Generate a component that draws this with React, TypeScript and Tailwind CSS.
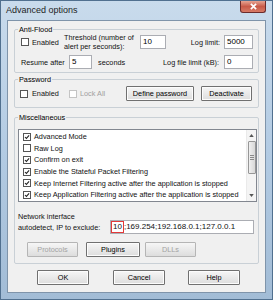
import type { ReactNode } from "react";

const FONT = { fontFamily: '"Liberation Sans", Arial, sans-serif' };

function Box({ checked = false, disabled = false }: { checked?: boolean; disabled?: boolean }) {
  return (
    <span
      className={`w-[8px] h-[8px] shrink-0 border ${disabled ? "border-[#c4c4c4]" : "border-[#555]"} bg-white flex items-center justify-center`}
    >
      {checked && (
        <svg viewBox="0 0 8 8" className="w-full h-full">
          <path d="M1.3 4 L3.2 5.9 L6.8 1.8" fill="none" stroke="#222" strokeWidth="1.4" />
        </svg>
      )}
    </span>
  );
}

function Field({ value, className = "" }: { value: ReactNode; className?: string }) {
  return (
    <div className={`h-[14px] border border-[#abadb3] bg-white px-[2px] text-[8px] leading-[12px] text-black ${className}`}>
      {value}
    </div>
  );
}

function Btn({ label, disabled = false, className = "" }: { label: string; disabled?: boolean; className?: string }) {
  return (
    <div
      className={`h-[15px] border rounded-[1px] flex items-center justify-center text-[7.3px] bg-gradient-to-b from-[#f6f6f6] to-[#dddddd] ${
        disabled ? "border-[#b5b5b5] text-[#a3a3a3]" : "border-[#707070] text-black shadow-[inset_0_0_0_1px_#fcfcfc]"
      } ${className}`}
    >
      {label}
    </div>
  );
}

function Group({ title, children, className = "" }: { title: string; children: ReactNode; className?: string }) {
  return (
    <fieldset className={`mx-[6px] border border-[#c9d0d6] rounded-[2px] ${className}`}>
      <legend className="ml-[3px] px-[1px] text-[7.3px] leading-[9px] text-black">{title}</legend>
      {children}
    </fieldset>
  );
}

const items: [string, boolean][] = [
  ["Advanced Mode", true],
  ["Raw Log", false],
  ["Confirm on exit", true],
  ["Enable the Stateful Packet Filtering", true],
  ["Keep Internet Filtering active after the application is stopped", true],
  ["Keep Application Filtering active after the application is stopped", true],
];

export default function App() {
  return (
    <div
      style={FONT}
      className="w-[273px] h-[300px] flex flex-col bg-gradient-to-b from-[#c9dbec] via-[#b3cbe3] to-[#a2bcd6] border border-[#51708f]"
    >
      {/* Title bar */}
      <div className="h-[19px] flex items-start justify-between pl-[5px] pr-[6px]">
        <span className="mt-[4px] text-[9px] leading-[11px] text-[#1e1e1e]">Advanced options</span>
        <span className="w-[26px] h-[12px] rounded-b-[3px] border border-t-0 border-[#6b2b2b] bg-gradient-to-b from-[#e6a493] via-[#c85a48] to-[#d77a66] flex items-center justify-center">
          <svg viewBox="0 0 10 8" className="w-[9px] h-[7px]">
            <path d="M2 1 L8 7 M8 1 L2 7" stroke="#fff" strokeWidth="2" />
          </svg>
        </span>
      </div>

      {/* Client */}
      <div className="mx-[6px] mb-[6px] flex-1 bg-[#f0f0f0] border border-[#7f94aa] pt-[4px] text-[7.3px] leading-[9px] text-[#111]">
        <Group title="Anti-Flood" className="pb-[3px]">
          <div className="pl-[6px] pr-[5px] pt-[1px]">
            <div className="flex items-center h-[14px]">
              <div className="w-[43px] flex items-center gap-[3px]">
                <Box />
                <span>Enabled</span>
              </div>
              <div className="w-[76px] leading-[9px]">
                Threshold (number of
                <br />
                alert per seconds):
              </div>
              <Field value="10" className="w-[26px]" />
              <div className="flex-1 text-right pr-[4px]">Log limit:</div>
              <Field value="5000" className="w-[29px]" />
            </div>
            <div className="flex items-center h-[14px] mt-[6px]">
              <div className="w-[48px]">Resume after</div>
              <Field value="5" className="w-[23px]" />
              <div className="ml-[6px]">seconds</div>
              <div className="flex-1 text-right pr-[5px]">Log file limit (kB):</div>
              <Field value="0" className="w-[29px]" />
            </div>
          </div>
        </Group>

        <Group title="Password" className="mt-[2px] pb-[6px]">
          <div className="flex items-center pl-[5px] pt-[2px]">
            <div className="w-[49px] flex items-center gap-[4px]">
              <Box />
              <span>Enabled</span>
            </div>
            <div className="w-[57px] flex items-center gap-[3px] text-[#a0a0a0]">
              <Box disabled />
              <span>Lock All</span>
            </div>
            <Btn label="Define password" className="w-[68px]" />
            <Btn label="Deactivate" className="w-[51px] ml-[7px]" />
          </div>
        </Group>

        <Group title="Miscellaneous" className="mt-[5px] pb-[6px]">
          <div className="pl-[3px] pt-[7px]">
            <div className="w-[239px] h-[73px] border border-[#828790] bg-white flex overflow-hidden">
              <div className="flex-1 pl-[4px] pt-[1px] overflow-hidden">
                {items.map(([label, on]) => (
                  <div key={label} className="h-[11.6px] flex items-center gap-[3px] whitespace-nowrap">
                    <Box checked={on} />
                    <span>{label}</span>
                  </div>
                ))}
              </div>
              <div className="w-[10px] flex flex-col items-center bg-[#f4f4f4] border-l border-[#eaeaea]">
                <svg viewBox="0 0 6 4" className="w-[5px] h-[3px] mt-[4px]">
                  <path d="M0 4 L3 0 L6 4 Z" fill="#555" />
                </svg>
                <div className="mt-[4px] w-[8px] h-[33px] rounded-[1px] border border-[#979797] bg-gradient-to-r from-[#f0f0f0] to-[#d8d8d8] flex flex-col items-center justify-center gap-[1px]">
                  <span className="w-[4px] h-px bg-[#8a8a8a]" />
                  <span className="w-[4px] h-px bg-[#8a8a8a]" />
                  <span className="w-[4px] h-px bg-[#8a8a8a]" />
                </div>
                <div className="flex-1" />
                <svg viewBox="0 0 6 4" className="w-[5px] h-[3px] mb-[4px]">
                  <path d="M0 0 L3 4 L6 0 Z" fill="#555" />
                </svg>
              </div>
            </div>

            <div className="flex items-start mt-[9px]">
              <div className="w-[92px] leading-[11px]">
                Network interface
                <br />
                autodetect, IP to exclude:
              </div>
              <div className="mt-[9px] w-[144px] h-[14px] border border-[#abadb3] bg-white text-[8px] leading-[12px] flex items-stretch whitespace-nowrap overflow-hidden">
                <span className="border border-[#e23a3a] px-[1px] leading-[10px]">10</span>
                <span>;169.254;192.168.0.1;127.0.0.1</span>
              </div>
            </div>

            <div className="flex items-center mt-[8px] pl-[9px]">
              <Btn label="Protocols" disabled className="w-[51px]" />
              <Btn label="Plugins" className="w-[54px] ml-[8px]" />
              <Btn label="DLLs" disabled className="w-[51px] ml-[5px]" />
            </div>
          </div>
        </Group>

        <div className="flex items-center mt-[6px] pl-[29px]">
          <Btn label="OK" className="w-[52px]" />
          <Btn label="Cancel" className="w-[52px] ml-[24px]" />
          <Btn label="Help" className="w-[52px] ml-[23px]" />
        </div>
      </div>
    </div>
  );
}
